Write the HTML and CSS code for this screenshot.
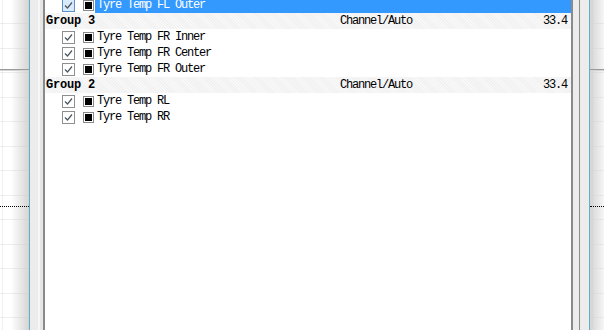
FILE: index.html
```html
<!DOCTYPE html>
<html lang="en">
<head>
    <meta charset="UTF-8">
    <title>Channels</title>
    <link rel="stylesheet" href="styles.css">
</head>
<body>
<div class="window">
    <div class="chart chart-left">
        <div class="axis-line"></div>
        <div class="zero-line"></div>
    </div>
    <div class="splitter splitter-left"></div>

    <div class="list">
        <div class="rows">
            <div class="item">
                <svg class="check hot" width="13" height="13" viewBox="0 0 13 13"><rect x="0.5" y="0.5" width="12" height="12"/><path d="M3 6.5 L5.5 9 L10 3.5"/></svg>
                <span class="swatch"><span></span></span>
                <span class="label selected">Tyre Temp FL Outer</span>
            </div>
            <div class="group">
                <span class="g-name">Group 3</span>
                <span class="g-chan">Channel/Auto</span>
                <span class="g-val">33.4</span>
            </div>
            <div class="item">
                <svg class="check" width="13" height="13" viewBox="0 0 13 13"><rect x="0.5" y="0.5" width="12" height="12"/><path d="M3 6.5 L5.5 9 L10 3.5"/></svg>
                <span class="swatch"><span></span></span>
                <span class="label">Tyre Temp FR Inner</span>
            </div>
            <div class="item">
                <svg class="check" width="13" height="13" viewBox="0 0 13 13"><rect x="0.5" y="0.5" width="12" height="12"/><path d="M3 6.5 L5.5 9 L10 3.5"/></svg>
                <span class="swatch"><span></span></span>
                <span class="label">Tyre Temp FR Center</span>
            </div>
            <div class="item">
                <svg class="check" width="13" height="13" viewBox="0 0 13 13"><rect x="0.5" y="0.5" width="12" height="12"/><path d="M3 6.5 L5.5 9 L10 3.5"/></svg>
                <span class="swatch"><span></span></span>
                <span class="label">Tyre Temp FR Outer</span>
            </div>
            <div class="group">
                <span class="g-name">Group 2</span>
                <span class="g-chan">Channel/Auto</span>
                <span class="g-val">33.4</span>
            </div>
            <div class="item">
                <svg class="check" width="13" height="13" viewBox="0 0 13 13"><rect x="0.5" y="0.5" width="12" height="12"/><path d="M3 6.5 L5.5 9 L10 3.5"/></svg>
                <span class="swatch"><span></span></span>
                <span class="label">Tyre Temp RL</span>
            </div>
            <div class="item">
                <svg class="check" width="13" height="13" viewBox="0 0 13 13"><rect x="0.5" y="0.5" width="12" height="12"/><path d="M3 6.5 L5.5 9 L10 3.5"/></svg>
                <span class="swatch"><span></span></span>
                <span class="label">Tyre Temp RR</span>
            </div>
        </div>
    </div>

    <div class="splitter splitter-right"></div>
    <div class="chart chart-right">
        <div class="axis-line"></div>
        <div class="zero-line"></div>
    </div>
</div>
</body>
</html>
```

FILE: styles.css
```css
html, body {
    margin: 0;
    padding: 0;
    background: #fff;
}

.window {
    display: flex;
    width: 604px;
    height: 330px;
    overflow: hidden;
    font-family: "Liberation Mono", "DejaVu Sans Mono", monospace;
    font-size: 12px;
    letter-spacing: -1.2px;
    color: #000;
}

/* chart panes either side of the list */
.chart {
    position: relative;
    height: 100%;
    background-color: #fff;
    background-image:
        repeating-linear-gradient(to bottom, transparent 0, transparent 23px, rgba(215,215,215,.45) 23px, rgba(215,215,215,.45) 24px, transparent 24px, transparent 24.5px),
        repeating-linear-gradient(to right, transparent 0, transparent 2px, rgba(215,215,215,.4) 2px, rgba(215,215,215,.4) 3px, transparent 3px, transparent 26px);
}
.chart-left {
    width: 29px;
    border-right: 1px solid #5fb2c6;
}
.chart-left::after {
    content: "";
    position: absolute;
    top: 0;
    bottom: 0;
    right: 0;
    width: 18px;
    background: linear-gradient(to right, rgba(220,220,220,0), rgba(205,205,205,.85));
}
.chart-right {
    width: 14px;
    border-left: 1px solid #5fb2c6;
}
.chart-right::after {
    content: "";
    position: absolute;
    top: 0;
    bottom: 0;
    left: 0;
    width: 14px;
    background: linear-gradient(to right, rgba(205,205,205,.85), rgba(225,225,225,.3));
}
.axis-line {
    position: absolute;
    left: 0;
    right: 0;
    top: 69px;
    height: 1px;
    background: #9a9a9a;
    border-bottom: 1px solid #d6d6d6;
    z-index: 1;
}
.zero-line {
    position: absolute;
    left: 0;
    right: 0;
    top: 206px;
    border-top: 1px dotted #000;
    z-index: 1;
}

.splitter {
    height: 100%;
    background: #ececec;
}
.splitter-left {
    width: 13px;
    background: linear-gradient(to right, #ececec 0, #ececec 8px, #f6f6f6 8px, #f6f6f6 10px, #e6e6e6 10px);
}
.splitter-right {
    width: 16px;
    background: linear-gradient(to right, #ececec 0, #ececec 6px, #8c8c8c 6px, #8c8c8c 7px, #ececec 7px);
}

/* channel list */
.list {
    width: 526px;
    height: 100%;
    background: #fff;
    border-left: 2px solid #8a8a8a;
    border-right: 2px solid #8a8a8a;
    overflow: hidden;
}
.rows {
    margin-top: -3px;
}
.item, .group {
    height: 16px;
    line-height: 16px;
    white-space: nowrap;
}
.item {
    display: flex;
    align-items: center;
    padding-left: 17px;
}
.check {
    flex: none;
    display: block;
}
.check rect {
    fill: #fff;
    stroke: #8e8f8f;
}
.check path {
    fill: none;
    stroke: #4d5560;
    stroke-width: 1.2;
}
.check.hot rect {
    fill: #d8eafb;
    stroke: #5b8fc7;
}
.swatch {
    flex: none;
    margin-left: 8px;
    width: 7px;
    height: 7px;
    padding: 1px;
    border: 1px solid #8a8a8a;
    background: #fff;
}
.swatch span {
    display: block;
    width: 7px;
    height: 7px;
    background: #000;
}
.label {
    flex: 1;
    margin-left: 1px;
    padding-left: 2px;
    height: 16px;
}
.label.selected {
    background: #3399ff;
    color: #fff;
}

.group {
    display: grid;
    grid-template-columns: 294px 1fr auto;
    padding: 0 4px 0 1px;
    background-color: #f1f1f1;
    background-image: repeating-linear-gradient(45deg, rgba(255,255,255,.5) 0, rgba(255,255,255,.5) 1px, transparent 1px, transparent 2px);
}
.g-name {
    font-weight: bold;
    letter-spacing: -0.2px;
}
```
